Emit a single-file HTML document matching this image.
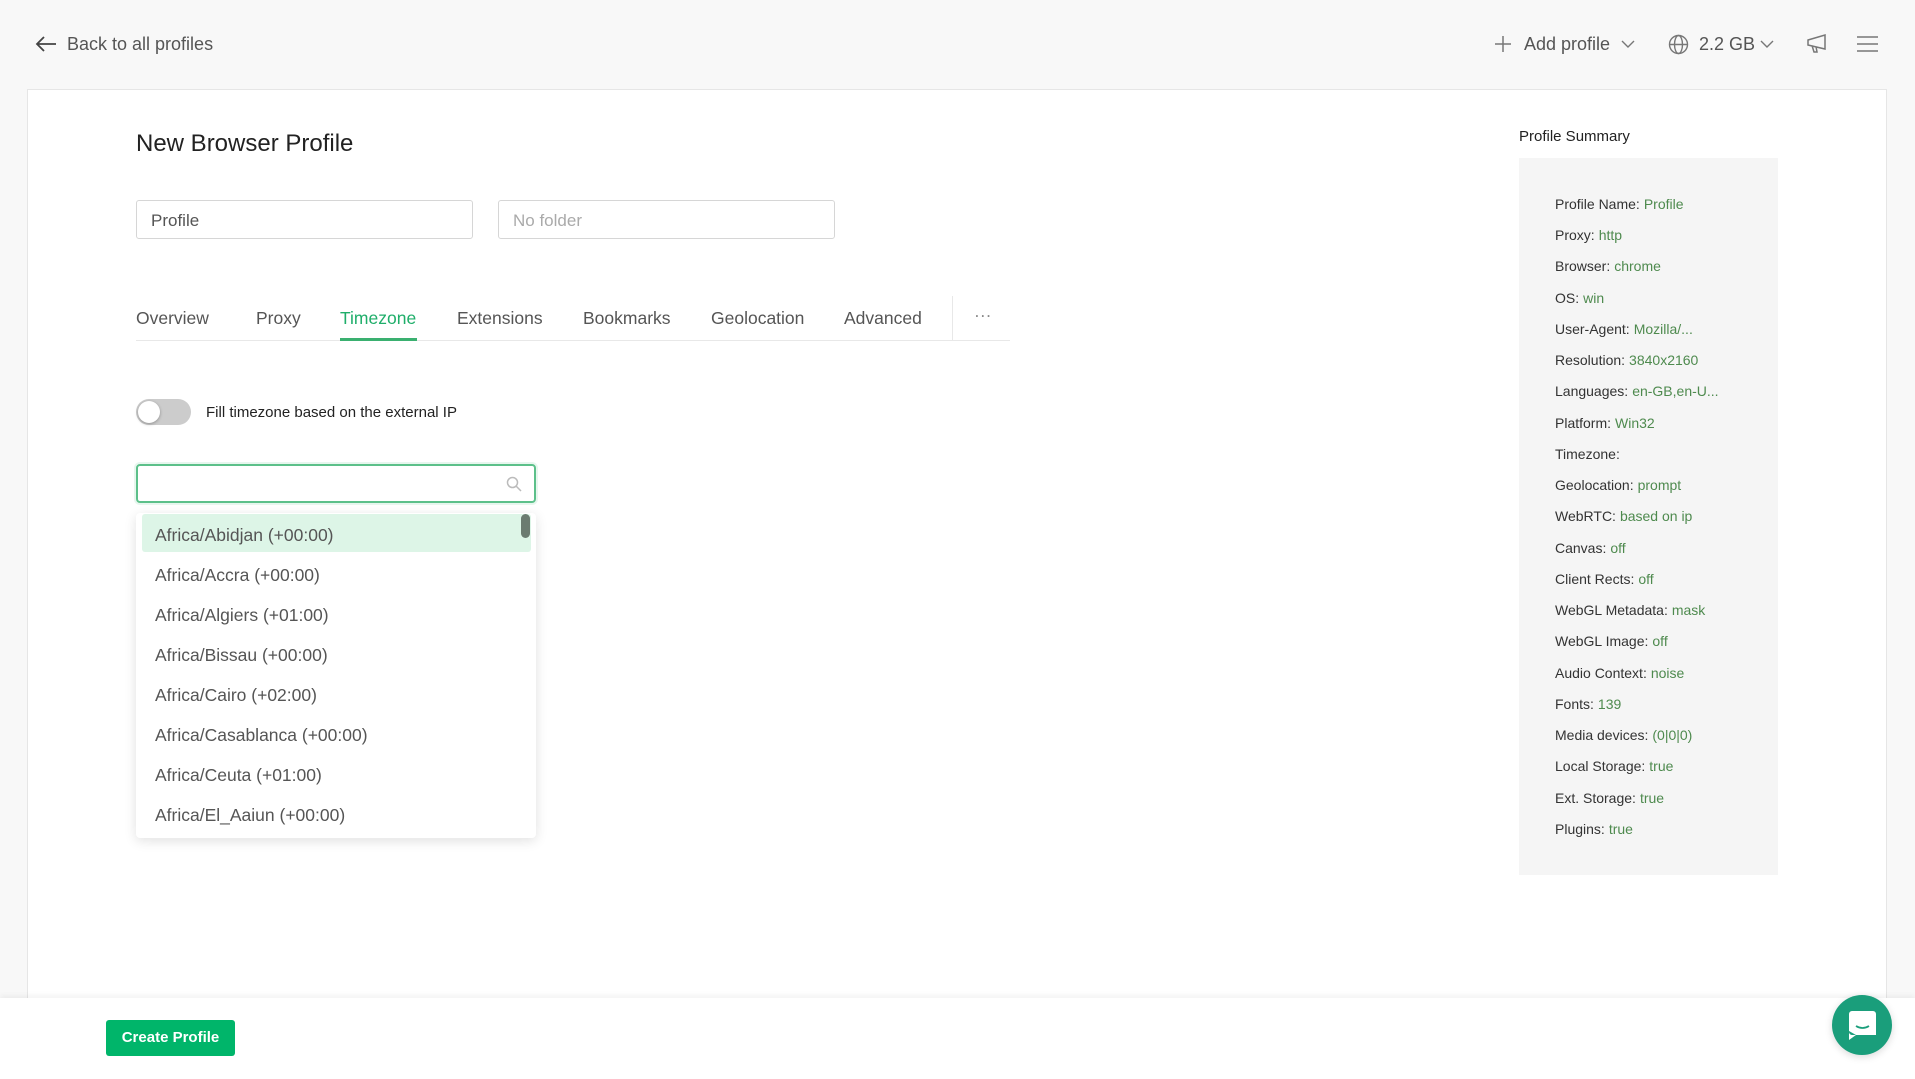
<!DOCTYPE html>
<html><head><meta charset="utf-8">
<style>
*{box-sizing:border-box;margin:0;padding:0}
body{width:1915px;height:1079px;background:#f8f8f8;font-family:"Liberation Sans",Arial,sans-serif;position:relative;overflow:hidden;color:#333}
.a{position:absolute}
.hdr{color:#555;font-size:18px}
.card{left:27px;top:89px;width:1860px;height:920px;background:#fff;border:1px solid #e6e6e6}
.inp{border:1px solid #d6d6d6;border-radius:3px;height:39px;font-size:17px;padding:0 14px;line-height:40px}
.tab{top:308px;font-size:17.5px;color:#555}
.item{left:155px;font-size:17.5px;color:#555}
.row{left:1555px;font-size:14px;color:#333}
.row span{color:#4e8a4e;margin-left:4px}
</style></head><body>
<svg class="a" style="left:35px;top:35px" width="22" height="18" viewBox="0 0 22 18"><path d="M9 2 L2 9 L9 16 M2 9 H21" stroke="#444" stroke-width="1.8" fill="none"/></svg>
<div class="a hdr" style="left:67px;top:34px">Back to all profiles</div>
<svg class="a" style="left:1494px;top:35px" width="18" height="18"><path d="M9 1V17M1 9H17" stroke="#777" stroke-width="1.5"/></svg>
<div class="a hdr" style="left:1524px;top:34px">Add profile</div>
<svg class="a" style="left:1621px;top:40px" width="14" height="9"><path d="M1 1L7 7L13 1" stroke="#777" stroke-width="1.4" fill="none"/></svg>
<svg class="a" style="left:1668px;top:34px" width="21" height="21" viewBox="0 0 21 21" fill="none" stroke="#777" stroke-width="1.4"><circle cx="10.5" cy="10.5" r="9"/><ellipse cx="10.5" cy="10.5" rx="4" ry="9"/><path d="M1.5 10.5H19.5"/></svg>
<div class="a hdr" style="left:1699px;top:34px">2.2 GB</div>
<svg class="a" style="left:1760px;top:40px" width="14" height="9"><path d="M1 1L7 7L13 1" stroke="#777" stroke-width="1.4" fill="none"/></svg>
<svg class="a" style="left:1806px;top:33px" width="22" height="22" viewBox="0 0 22 22" fill="none" stroke="#777" stroke-width="1.5"><path d="M2 7L19 2V16L2 12Z M6 12.5L8 19H11L10 13.5"/></svg>
<svg class="a" style="left:1857px;top:35px" width="21" height="18"><path d="M0 2H21M0 9H21M0 16H21" stroke="#777" stroke-width="1.5"/></svg>

<div class="a card"></div>
<div class="a" style="left:136px;top:130px;font-size:24px;color:#222">New Browser Profile</div>
<div class="a inp" style="left:136px;top:200px;width:337px;color:#555">Profile</div>
<div class="a inp" style="left:498px;top:200px;width:337px;color:#aaa">No folder</div>

<div class="a" style="left:136px;top:340px;width:874px;height:1px;background:#e8e8e8"></div>
<div class="a tab" style="left:136px">Overview</div>
<div class="a tab" style="left:256px">Proxy</div>
<div class="a tab" style="left:340px;color:#1fae6a">Timezone</div>
<div class="a" style="left:340px;top:338px;width:77px;height:3px;background:#3ab070"></div>
<div class="a tab" style="left:457px">Extensions</div>
<div class="a tab" style="left:583px">Bookmarks</div>
<div class="a tab" style="left:711px">Geolocation</div>
<div class="a tab" style="left:844px">Advanced</div>
<div class="a" style="left:952px;top:296px;width:1px;height:44px;background:#e8e8e8"></div>
<div class="a tab" style="left:974px;top:305px;color:#888">···</div>

<div class="a" style="left:136px;top:399px;width:55px;height:26px;border-radius:13px;background:#ccc"></div>
<div class="a" style="left:138px;top:401px;width:22px;height:22px;border-radius:50%;background:#fff;box-shadow:0 1px 3px rgba(0,0,0,.3)"></div>
<div class="a" style="left:206px;top:404px;font-size:15px;color:#222">Fill timezone based on the external IP</div>

<div class="a" style="left:136px;top:464px;width:400px;height:39px;border:2px solid #5cc08a;border-radius:4px;box-shadow:0 0 0 2px rgba(92,192,138,.15)"></div>
<svg class="a" style="left:506px;top:476px" width="16" height="16" fill="none" stroke="#bbb" stroke-width="1.5"><circle cx="6.5" cy="6.5" r="5"/><path d="M10 10L15 15"/></svg>

<div class="a" style="left:136px;top:513px;width:400px;height:325px;background:#fff;border-radius:4px;box-shadow:0 3px 12px rgba(0,0,0,.12)"></div>
<div class="a" style="left:142px;top:514px;width:389px;height:38px;background:#ddf5e7;border-radius:3px"></div>
<div class="a" style="left:521px;top:514px;width:9px;height:24px;background:#6b7b70;border-radius:5px"></div>
<div class="a item" style="top:525px">Africa/Abidjan (+00:00)</div>
<div class="a item" style="top:565px">Africa/Accra (+00:00)</div>
<div class="a item" style="top:605px">Africa/Algiers (+01:00)</div>
<div class="a item" style="top:645px">Africa/Bissau (+00:00)</div>
<div class="a item" style="top:685px">Africa/Cairo (+02:00)</div>
<div class="a item" style="top:725px">Africa/Casablanca (+00:00)</div>
<div class="a item" style="top:765px">Africa/Ceuta (+01:00)</div>
<div class="a item" style="top:805px">Africa/El_Aaiun (+00:00)</div>

<div class="a" style="left:1519px;top:128px;font-size:15px;color:#222">Profile Summary</div>
<div class="a" style="left:1519px;top:158px;width:259px;height:717px;background:#f5f5f5"></div>
<div class="a row" style="top:196px">Profile Name:<span>Profile</span></div>
<div class="a row" style="top:227px">Proxy:<span>http</span></div>
<div class="a row" style="top:258px">Browser:<span>chrome</span></div>
<div class="a row" style="top:290px">OS:<span>win</span></div>
<div class="a row" style="top:321px">User-Agent:<span>Mozilla/...</span></div>
<div class="a row" style="top:352px">Resolution:<span>3840x2160</span></div>
<div class="a row" style="top:383px">Languages:<span>en-GB,en-U...</span></div>
<div class="a row" style="top:415px">Platform:<span>Win32</span></div>
<div class="a row" style="top:446px">Timezone:</div>
<div class="a row" style="top:477px">Geolocation:<span>prompt</span></div>
<div class="a row" style="top:508px">WebRTC:<span>based on ip</span></div>
<div class="a row" style="top:540px">Canvas:<span>off</span></div>
<div class="a row" style="top:571px">Client Rects:<span>off</span></div>
<div class="a row" style="top:602px">WebGL Metadata:<span>mask</span></div>
<div class="a row" style="top:633px">WebGL Image:<span>off</span></div>
<div class="a row" style="top:665px">Audio Context:<span>noise</span></div>
<div class="a row" style="top:696px">Fonts:<span>139</span></div>
<div class="a row" style="top:727px">Media devices:<span>(0|0|0)</span></div>
<div class="a row" style="top:758px">Local Storage:<span>true</span></div>
<div class="a row" style="top:790px">Ext. Storage:<span>true</span></div>
<div class="a row" style="top:821px">Plugins:<span>true</span></div>

<div class="a" style="left:0;top:998px;width:1915px;height:81px;background:#fff;box-shadow:0 -2px 6px rgba(0,0,0,.06)"></div>
<div class="a" style="left:106px;top:1020px;width:129px;height:36px;background:#00b56a;border-radius:3px;color:#fff;font-size:15px;font-weight:bold;text-align:center;line-height:36px">Create Profile</div>
<div class="a" style="left:1832px;top:995px;width:60px;height:60px;border-radius:50%;background:#1a9e7b;box-shadow:0 2px 8px rgba(0,0,0,.15)"></div>
<svg class="a" style="left:1849px;top:1011px" width="27" height="29" viewBox="0 0 27 29"><path d="M3 0H24A3 3 0 0 1 27 3V24H3A3 3 0 0 1 0 21V3A3 3 0 0 1 3 0Z M0 20V29L7 24Z" fill="#fff"/><path d="M7 15Q13.5 19 20 15" stroke="#1a9e7b" stroke-width="1.8" fill="none"/></svg>
</body></html>
